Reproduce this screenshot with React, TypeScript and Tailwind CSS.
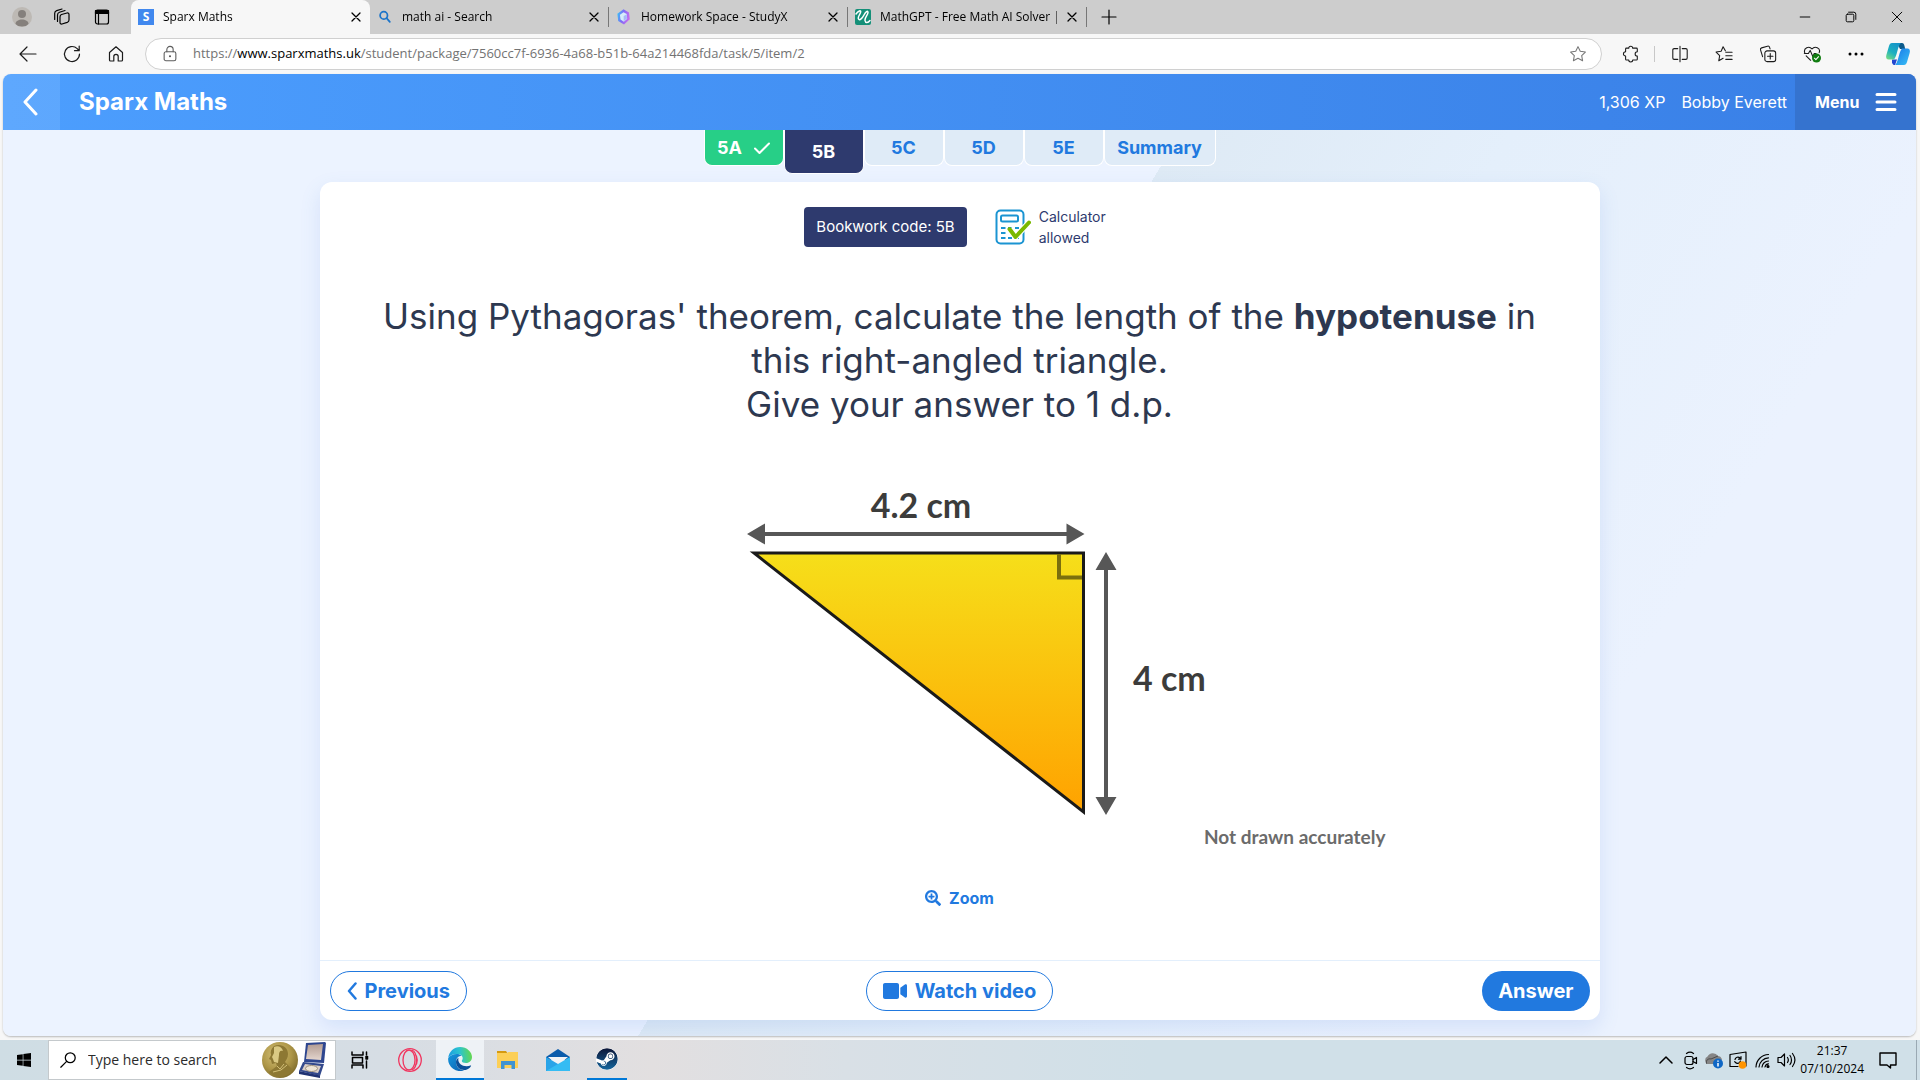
import { useState } from "react";
import type { ReactNode } from "react";
import { FaSearchPlus, FaSteam, FaVideo, FaWindows } from "react-icons/fa";

interface IconProps {
  children: ReactNode;
  className?: string;
  width?: number;
}

// thin outline icon, 20x20 box
function Line({ children, className = "size-5", width = 1.2 }: IconProps) {
  return (
    <svg
      viewBox="0 0 20 20"
      className={`shrink-0 ${className}`}
      fill="none"
      stroke="currentColor"
      strokeWidth={width}
      strokeLinecap="round"
      strokeLinejoin="round"
      aria-hidden="true"
    >
      {children}
    </svg>
  );
}

const STAR = "M10 1.8l2.5 5.2 5.7.8-4.1 4 1 5.7-5.1-2.7-5.1 2.7 1-5.7-4.1-4 5.7-.8z";

function SparxFavicon() {
  return (
    <span className="flex size-4 shrink-0 items-center justify-center bg-[#4188ee] text-xs font-bold text-white">
      S
    </span>
  );
}

function SearchFavicon() {
  return (
    <Line className="size-4 text-[#1b74c9]" width={2.2}>
      <circle cx="8.5" cy="8" r="4.6" />
      <path d="M12 11.5l4 4.5" />
    </Line>
  );
}

function StudyFavicon() {
  return (
    <svg viewBox="0 0 16 16" className="size-4 shrink-0" aria-hidden="true">
      <defs>
        <linearGradient id="study" x1="0" y1="0" x2="1" y2="0.3">
          <stop offset="0" stopColor="#2bd0f6" />
          <stop offset="0.5" stopColor="#7f6cf5" />
          <stop offset="1" stopColor="#c56cf0" />
        </linearGradient>
      </defs>
      <path d="M7.5.3L13 3.4l.8 6.8L8 15.6 2.2 12l-.8-7.2z" fill="url(#study)" />
      <path d="M7.5 3.2l3.2 1.9.5 4.6-3.3 3-3.4-2.2-.6-4.7z" fill="#d5ecfb" />
      <path d="M7.7 7v5.2L11 9.6l-.3-4.2z" fill="#a9b7f8" />
    </svg>
  );
}

function MathFavicon() {
  return (
    <svg viewBox="0 0 16 16" className="size-4 shrink-0" aria-hidden="true">
      <rect width="16" height="16" rx="2" fill="#148f78" />
      <path
        d="M1 5C3 2 6.500 .5 5.500 3.500S2.500 8 3.500 10s4-1 5.500-4 4-5 4-2.500-3.500 5-3 8 3 2.500 5 0"
        fill="none"
        stroke="#fff"
        strokeWidth="1.5"
        strokeLinecap="round"
      />
    </svg>
  );
}

const browserTabs = [
  { title: "Sparx Maths", icon: <SparxFavicon /> },
  { title: "math ai - Search", icon: <SearchFavicon /> },
  { title: "Homework Space - StudyX", icon: <StudyFavicon /> },
  { title: "MathGPT - Free Math AI Solver | N", icon: <MathFavicon /> },
];

function TabStrip() {
  return (
    <div className="flex h-[34px] items-stretch bg-[#cdcdcd] text-black">
      <div className="flex w-[131px] shrink-0 items-center gap-5 pl-3">
        <button aria-label="Profile" className="size-5 overflow-hidden rounded-full bg-[#bdb9b4]">
          <svg viewBox="0 0 20 20" fill="#85807c">
            <circle cx="10" cy="7" r="4" />
            <path d="M3.5 17c0-6 13-6 13 0l-3 2.5h-7z" />
          </svg>
        </button>
        <button aria-label="Workspaces">
          <Line className="size-5">
            <path d="M9.5 7.5L15 6c1.2-.3 2 .3 2 1.5V13c0 1.2-.6 2-1.8 2.4L10 17c-1.2.3-2-.3-2-1.5V10c0-1.3.4-2.2 1.5-2.5z" />
            <path d="M5.5 14.5V8c0-1.5.8-2.3 2-2.7L13 3.5M2.700 12.500V6.300c0-1.500.8-2.300 2-2.700L10 2" />
          </Line>
        </button>
        <button aria-label="Tab actions">
          <Line className="size-5">
            <rect x="3.5" y="3" width="13" height="14" rx="2" />
            <path d="M3.5 3.5h13v3h-13z" fill="currentColor" />
            <path d="M6.5 7v10" />
          </Line>
        </button>
      </div>

      {browserTabs.map((tab, index) => (
        <div
          key={tab.title}
          className={`flex w-[239px] min-w-0 items-center pl-[7px] ${
            index === 0 ? "rounded-t-lg bg-[#f7f7f7]" : ""
          }`}
        >
          {tab.icon}
          <span className="ml-[9px] min-w-0 flex-1 overflow-hidden text-xs whitespace-nowrap [mask-image:linear-gradient(90deg,#000_94%,transparent)]">
            {tab.title}
          </span>
          <button aria-label={`Close ${tab.title}`} className="mr-[6px]">
            <Line className="size-4" width={1.6}>
              <path d="M5 5l10 10M15 5L5 15" />
            </Line>
          </button>
          {index > 0 && <span className="h-5 w-px bg-[#777]" />}
        </div>
      ))}

      <button aria-label="New tab" className="ml-2 w-7">
        <Line className="mx-auto size-5">
          <path d="M10 3v14M3 10h14" />
        </Line>
      </button>

      <div className="ml-auto flex">
        <button aria-label="Minimise" className="flex w-[46px] items-center justify-center">
          <Line className="size-4">
            <path d="M4 10h12" />
          </Line>
        </button>
        <button aria-label="Restore" className="flex w-[46px] items-center justify-center">
          <Line className="size-4">
            <rect x="4" y="6.5" width="9.5" height="9.5" rx="1.5" />
            <path d="M7 4h6.5A2.5 2.5 0 0 1 16 6.500V13" />
          </Line>
        </button>
        <button aria-label="Close window" className="flex w-[46px] items-center justify-center">
          <Line className="size-4">
            <path d="M4 4l12 12M16 4L4 16" />
          </Line>
        </button>
      </div>
    </div>
  );
}

function AddressBar() {
  return (
    <div className="flex h-10 items-center bg-[#f7f7f7] text-[#1b1b1b]">
      <div className="flex w-[145px] shrink-0 gap-6 pl-[18px]">
        <button aria-label="Back">
          <Line>
            <path d="M18 10H2.5M9 3l-7 7 7 7" />
          </Line>
        </button>
        <button aria-label="Refresh">
          <Line>
            <path d="M17.5 10a7.5 7.5 0 1 1-2.3-5.4L17 6.500M17.200 2v4.700h-4.700" />
          </Line>
        </button>
        <button aria-label="Home">
          <Line>
            <path d="M3.5 8.5L10 2.800l6.500 5.700V16a1 1 0 0 1-1 1h-3.300v-4.500a2.200 2.200 0 0 0-4.400 0V17H4.500a1 1 0 0 1-1-1z" />
          </Line>
        </button>
      </div>

      <div className="flex h-8 flex-1 items-center rounded-full border border-[#d0d0d0] bg-white pr-[14px] pl-[15px]">
        <Line className="size-[18px] text-[#5c5c5c]">
          <rect x="3.5" y="7.5" width="13" height="10" rx="2" />
          <path d="M6.5 7.5V5a3.500 3.500 0 0 1 7 0v2.500" />
          <circle cx="10" cy="12.5" r="0.6" fill="currentColor" />
        </Line>
        <p className="ml-[14px] flex-1 text-[13px] text-[#737373]">
          https://<span className="text-black">www.sparxmaths.uk</span>
          /student/package/7560cc7f-6936-4a68-b51b-64a214468fda/task/5/item/2
        </p>
        <button aria-label="Add to favourites" className="text-[#777]">
          <Line className="size-[18px]">
            <path d={STAR} />
          </Line>
        </button>
      </div>

      <div className="flex w-[318px] shrink-0 items-center pl-5">
        <button aria-label="Extensions">
          <Line className="size-[18px]">
            <path d="M7.5 3.5a2.200 2.200 0 0 1 4.400 0H16a1 1 0 0 1 1 1v3a2.400 2.400 0 0 0 0 4.800v3.400a1 1 0 0 1-1 1h-4.100a2.200 2.200 0 0 1-4.400 0H5a1 1 0 0 1-1-1v-3.400a2.400 2.400 0 0 1 0-4.800v-3a1 1 0 0 1 1-1z" />
          </Line>
        </button>
        <span className="ml-[14px] h-4 w-px bg-[#c8c8c8]" />
        <div className="ml-4 flex items-center gap-[26px]">
          <button aria-label="Split screen">
            <Line className="size-[18px]">
              <path d="M10 1.5v17M7.5 4h-4A1.500 1.500 0 0 0 2 5.500v9A1.500 1.500 0 0 0 3.500 16h4M12.500 4h4A1.500 1.500 0 0 1 18 5.500v9a1.500 1.500 0 0 1-1.500 1.500h-4" />
            </Line>
          </button>
          <button aria-label="Favourites">
            <Line className="size-[18px]">
              <path d="M11.5 6.5L9 2 6.800 7l-5.600.8 4 4-1 5.700L9 14.800M12 8h7M12 12h7M12 16h7" />
            </Line>
          </button>
          <button aria-label="Collections">
            <Line className="size-[18px]">
              <rect x="6.5" y="6.5" width="12" height="12" rx="2.5" />
              <path d="M12.5 9.5v6M9.5 12.5h6M4 13L1.700 5.500c-.3-1 .2-2 1.200-2.300l6.500-1.900c1-.3 2 .2 2.300 1.200l.6 1.800" />
            </Line>
          </button>
          <button aria-label="Browser essentials">
            <Line className="size-[18px]">
              <path d="M2 9C0 3 7 .5 10 4.500 13 .5 20 3 18 8.500M3.500 12l5 5M1.500 9.500H6l2-3.500 3 7 1.500-3.500h2" />
              <circle cx="15" cy="14.5" r="5" fill="#107c10" stroke="none" />
              <path d="M12.7 14.7l1.6 1.6 3-3.3" stroke="#fff" />
            </Line>
          </button>
          <button aria-label="Settings and more">
            <svg viewBox="0 0 18 18" className="size-[18px]">
              <circle cx="3" cy="9" r="1.5" />
              <circle cx="9" cy="9" r="1.5" />
              <circle cx="15" cy="9" r="1.5" />
            </svg>
          </button>
        </div>
        <button aria-label="Copilot" className="ml-[21px]">
          <svg viewBox="0 0 24 24" className="size-6">
            <defs>
              <linearGradient id="cop1" x1="0" y1="1" x2="0.6" y2="0">
                <stop offset="0" stopColor="#7ee07c" />
                <stop offset="0.5" stopColor="#1cb0c0" />
                <stop offset="1" stopColor="#1596c8" />
              </linearGradient>
              <linearGradient id="cop2" x1="0" y1="0" x2="1" y2="1">
                <stop offset="0" stopColor="#1877e8" />
                <stop offset="1" stopColor="#39c0f5" />
              </linearGradient>
            </defs>
            <path d="M11 1h5c1.5 0 2 1 2.500 3l.7 3H14z" fill="#0c5a8a" />
            <path d="M6 17.5h5L9 23H8c-1 0-1.5-1-2-2.500z" fill="#2446d0" />
            <path d="M6 1h9c-3 1-4 14-7 16.500H2.500C0 17.500-.3 15 .5 12.500L3 4c.6-2 1.500-3 3-3z" fill="url(#cop1)" />
            <path d="M16 6.500h5.500c2.500 0 2.800 2.500 2 5L21 20c-.6 2-1.500 3-3 3H9c3-1 4-14 7-16.500z" fill="url(#cop2)" />
          </svg>
        </button>
      </div>
    </div>
  );
}

function SiteHeader() {
  return (
    <header className="flex h-14 items-stretch bg-linear-to-r from-[#4c9efe] to-[#397fe6] text-white">
      <button aria-label="Back" className="flex w-[57px] items-center bg-white/10 pl-[19px]">
        <svg viewBox="0 0 16 28" className="h-7 w-4" fill="none" stroke="currentColor" strokeWidth="3" strokeLinecap="round" strokeLinejoin="round">
          <path d="M14 2L3 14l11 12" />
        </svg>
      </button>
      <a href="#" className="ml-[19px] self-center text-2xl font-bold">
        Sparx Maths
      </a>
      <div className="ml-auto flex items-center gap-4 pr-2 text-base">
        <span>1,306 XP</span>
        <span>Bobby Everett</span>
      </div>
      <button className="flex w-[121px] items-center gap-4 bg-[#3573cf] pl-5 text-base font-bold">
        Menu
        <svg viewBox="0 0 22 20" className="h-5 w-[22px]" stroke="currentColor" strokeWidth="3" strokeLinecap="round">
          <path d="M2 2.5h18M2 10h18M2 17.5h18" />
        </svg>
      </button>
    </header>
  );
}

const taskTabs = ["5A", "5B", "5C", "5D", "5E", "Summary"];

function TaskTabs({ current, onSelect }: { current: string; onSelect: (tab: string) => void }) {
  return (
    <nav className="flex h-[52px] items-start justify-center text-lg font-bold">
      {taskTabs.map((tab) => {
        const done = tab === "5A";
        const color =
          tab === current
            ? "h-11 bg-[#2e3a6e] text-white"
            : done
              ? "h-9 bg-[#27cf87] text-white"
              : "h-9 bg-[#dfebf7] text-[#2179df]";
        return (
          <button
            key={tab}
            onClick={() => onSelect(tab)}
            className={`flex items-center justify-center gap-3 rounded-b-lg border border-t-0 border-white ${color} ${
              tab === "Summary" ? "w-28" : "w-20"
            }`}
          >
            {tab}
            {done && (
              <svg viewBox="0 0 16 12" className="h-3 w-4" fill="none" stroke="currentColor" strokeWidth="2" strokeLinecap="round" strokeLinejoin="round">
                <path d="M1 6.5L5.5 11 15 1.5" />
              </svg>
            )}
          </button>
        );
      })}
    </nav>
  );
}

function CalculatorIcon() {
  return (
    <svg viewBox="0 0 36 36" className="size-9" fill="none" aria-hidden="true">
      <rect x="1.5" y="1.5" width="27" height="33" rx="4" stroke="#1b94d2" strokeWidth="2" />
      <rect x="6" y="6.5" width="17" height="6" rx="1.5" stroke="#1b94d2" strokeWidth="2" />
      <path d="M6 19h4.5M13 19h4M20 19h4M6 24h4.5M6 29h4.5M13 29h4M20 29h4" stroke="#1b94d2" strokeWidth="2.2" />
      <path d="M14.5 20l6 8L34 13.5" stroke="#fff" strokeWidth="6" />
      <path d="M14.5 20l6 8L34 13.5" stroke="#7ab800" strokeWidth="4" strokeLinecap="round" strokeLinejoin="round" />
    </svg>
  );
}

function TriangleFigure() {
  return (
    <svg
      viewBox="0 0 880 380"
      className="w-full max-w-[880px] font-['Lato',sans-serif] font-bold"
      role="img"
      aria-label="Right-angled triangle with sides 4.2 cm and 4 cm"
    >
      <defs>
        <linearGradient id="fill" x1="0" y1="0" x2="0" y2="1">
          <stop offset="0" stopColor="#f6df1a" />
          <stop offset="1" stopColor="#ffa200" />
        </linearGradient>
      </defs>
      <path d="M234 73H563.5V332z" fill="url(#fill)" stroke="#1a1a1a" strokeWidth="3" />
      <path d="M539 74V97.5H562" fill="none" stroke="#7b6f0d" strokeWidth="4" />
      <g fill="#575757">
        <path d="M240 52h310v4H240z" />
        <path d="M227 54l18-10.5v21zM564.5 54l-18-10.5v21z" />
        <path d="M584 85h4v240h-4z" />
        <path d="M586 72l-10.5 18h21zM586 335l-10.5-18h21z" />
      </g>
      <text x="401" y="38" textAnchor="middle" fontSize="34" fill="#3c3c3b">
        4.2 cm
      </text>
      <text x="613" y="211" fontSize="34" fill="#3c3c3b">
        4 cm
      </text>
      <text x="684" y="364" fontSize="19" fill="#6b6b6b">
        Not drawn accurately
      </text>
    </svg>
  );
}

function QuestionCard() {
  return (
    <section className="flex w-full max-w-7xl flex-1 flex-col rounded-xl bg-white shadow-[0_8px_20px_rgba(80,130,220,0.15)]">
      <div className="flex flex-1 flex-col items-center px-10">
        <div className="mt-6 flex items-center text-[#2e3a6e]">
          <div className="rounded-sm bg-[#2e3a6e] px-3 py-2 text-[15px] leading-6 text-white">
            Bookwork code: 5B
          </div>
          <div className="ml-7 flex items-center gap-2">
            <CalculatorIcon />
            <p className="w-[76px] text-sm leading-[21px]">Calculator allowed</p>
          </div>
        </div>

        <h1 className="mt-[46px] text-center text-[35px] leading-[44px] text-[#2d3850]">
          Using Pythagoras' theorem, calculate the length of the{" "}
          <strong className="font-bold">hypotenuse</strong> in
          <br />
          this right-angled triangle.
          <br />
          Give your answer to 1 d.p.
        </h1>

        <div className="mt-[54px] flex w-full justify-center">
          <TriangleFigure />
        </div>

        <button className="mt-[26px] flex items-center gap-2 font-bold text-[#2179df]">
          <FaSearchPlus className="size-4" />
          Zoom
        </button>
      </div>

      <footer className="grid grid-cols-3 items-center border-t border-[#e3effc] px-[10px] pt-[10px] pb-[9px] text-xl font-bold text-[#2179df]">
        <button className="flex h-10 items-center gap-2 justify-self-start rounded-full border border-[#2179df] px-4">
          <svg viewBox="0 0 10 18" className="h-[18px] w-[10px]" fill="none" stroke="currentColor" strokeWidth="2.5" strokeLinecap="round" strokeLinejoin="round">
            <path d="M8.5 1.5L2 9l6.5 7.5" />
          </svg>
          Previous
        </button>
        <button className="flex h-10 items-center gap-2 justify-self-center rounded-full border border-[#2179df] px-4">
          <FaVideo className="size-6" />
          Watch video
        </button>
        <button className="h-10 justify-self-end rounded-full bg-[#2179df] px-4 text-white">
          Answer
        </button>
      </footer>
    </section>
  );
}

function NobelArt() {
  return (
    <svg viewBox="0 0 66 38" className="h-[38px] w-[66px] shrink-0" aria-hidden="true">
      <defs>
        <radialGradient id="gold" cx="0.4" cy="0.35" r="0.7">
          <stop offset="0" stopColor="#d6c27a" />
          <stop offset="0.6" stopColor="#ad9647" />
          <stop offset="1" stopColor="#7d6a2b" />
        </radialGradient>
        <linearGradient id="satin" x1="0" y1="0" x2="0" y2="1">
          <stop offset="0" stopColor="#b39d93" />
          <stop offset="1" stopColor="#e3d5cd" />
        </linearGradient>
      </defs>
      <circle cx="18" cy="19" r="18" fill="url(#gold)" />
      <path d="M12 5c7-3 14 1 14 8 0 4-2 6-3 8l8 8c-5 8-19 9-24 2l8-6-1-3-4 1-1-4-2-1 2-4c-1-3 0-6 3-9z" fill="#8d7833" />
      <path d="M12 6c4-2 8 0 9 4-3-1-4 1-4 4l-1 8-4-1-1-3-1-2 2-4z" fill="#dac983" />
      <path d="M15 25l3 3 4-5M11 31l8-2 6-5" stroke="#d3c078" fill="none" />
      <path d="M44 2l19-1 1 1-2 20-20-1z" fill="#2e468f" />
      <path d="M46 4l15-1-2 16-15-1z" fill="url(#satin)" />
      <path d="M41 21l21 2-4 12-21-5z" fill="#33498c" />
      <path d="M43 23l16 2-3 7-16-3z" fill="#d9cec8" />
      <ellipse cx="49.5" cy="27.5" rx="6" ry="3" fill="#eee4d5" stroke="#9b8f7c" />
      <path d="M37 30l21 4.5V37l-21-4z" fill="#1f3272" />
    </svg>
  );
}

function EdgeLogo() {
  return (
    <svg viewBox="0 0 24 24" className="size-6" aria-hidden="true">
      <defs>
        <linearGradient id="edgeTop" x1="0" y1="0.5" x2="1" y2="0.4">
          <stop offset="0" stopColor="#1b9de2" />
          <stop offset="0.5" stopColor="#2bc4cf" />
          <stop offset="1" stopColor="#66d84a" />
        </linearGradient>
        <linearGradient id="edgeLow" x1="0" y1="0" x2="1" y2="1">
          <stop offset="0" stopColor="#1597dd" />
          <stop offset="1" stopColor="#0b5fb0" />
        </linearGradient>
      </defs>
      <path d="M.2 11C1 4.5 6 0 12 0c7 0 12 5 12 10 0 3.5-2.5 6-6 6-2.500 0-4.200-1-4.200-2 0-.6.9-1 .9-2.700C14.700 8.500 12 7 8.800 7 5 7 2 8.500.2 11z" fill="url(#edgeTop)" />
      <path d="M.1 11.5C1.5 8.5 5 7 8.800 7c2 0 3.700.6 4.700 1.700C9.500 9 8 12 8 15c0 5 4 8.500 8.500 8.200A12 12 0 0 1 .1 11.500z" fill="url(#edgeLow)" />
      <path d="M10.5 10.7C8.5 12 8 13.5 8 15c0 5.500 5.500 9.500 11 7.500 2-.9 3.300-2.200 4-3.500.3-.5-.2-.8-.6-.5-1 .5-2.200.8-3.800.8-5 0-8.300-3.500-8.300-6.500 0-.8.1-1.500.2-2.100z" fill="#0a4f98" />
    </svg>
  );
}

function SteamLogo() {
  return (
    <>
      <svg width="0" height="0" aria-hidden="true">
        <defs>
          <linearGradient id="steam" x1="0" y1="0" x2="0" y2="1">
            <stop offset="0" stopColor="#0c1638" />
            <stop offset="1" stopColor="#15659c" />
          </linearGradient>
        </defs>
      </svg>
      <FaSteam className="size-[22px] rounded-full bg-white" fill="url(#steam)" />
    </>
  );
}

function Taskbar() {
  return (
    <div className="flex h-10 items-stretch bg-[linear-gradient(90deg,#cfdde4,#d6dde4_20%,#e2dfe0_34%,#d9e0e6_44%,#d0e0e8_60%,#d0e0e8)] text-black">
      <button aria-label="Start" className="flex w-12 items-center justify-center">
        <FaWindows className="size-4" />
      </button>
      <label className="flex w-72 items-center border border-[#c4c9cc] bg-white pr-[7px] pl-[10px]">
        <Line className="size-[18px]" width={1.4}>
          <circle cx="12.5" cy="7.5" r="5.5" />
          <path d="M8.5 11.5L2 18" />
        </Line>
        <input
          type="text"
          aria-label="Search"
          placeholder="Type here to search"
          className="ml-[11px] min-w-0 flex-1 text-sm outline-none placeholder:text-[#2b2b2b]"
        />
        <NobelArt />
      </label>
      <button aria-label="Task view" className="flex w-12 items-center justify-center">
        <Line className="size-5" width={1.5}>
          <path d="M2 2v3h11V2M2 18v-3h11v3M2.5 7.5h10V13h-10zM16.5 2v3M16.5 11v7" />
          <path d="M16 6.5h1.5V9H16z" fill="currentColor" />
        </Line>
      </button>
      <button aria-label="Opera" className="flex w-[52px] items-center justify-center">
        <svg viewBox="0 0 24 24" className="size-6" fill="none" stroke="#f0365f" strokeWidth="1.3">
          <circle cx="12" cy="12" r="11.3" />
          <ellipse cx="11" cy="12" rx="6" ry="10" />
          <path d="M14 2c6 3 6 17 0 20M17 6c3 3 3 9 0 12" />
        </svg>
      </button>
      <button aria-label="Microsoft Edge" className="flex w-12 items-center justify-center border-b-2 border-[#0078d7] bg-[#eef2f6]">
        <EdgeLogo />
      </button>
      <button aria-label="File Explorer" className="flex w-12 items-center justify-center">
        <svg viewBox="0 0 24 20" className="h-5 w-6">
          <path d="M1 1h9l2 3H1z" fill="#d59a10" />
          <path d="M1 3h10l1.5-1H22v16H1z" fill="#fccf57" />
          <path d="M5 11h14v8h-3.5v-4h-7v4H5z" fill="#3f93d2" />
        </svg>
      </button>
      <button aria-label="Mail" className="flex w-[52px] items-center justify-center">
        <svg viewBox="0 0 24 24" className="size-6">
          <path d="M0 9L12 1l12 8v3H0z" fill="#0b5cab" />
          <path d="M2 9h20l-8 7H10z" fill="#f2f3f5" />
          <path d="M0 9l24 14H0z" fill="#2aa4e8" />
          <path d="M24 9L0 23h24z" fill="#35bcf3" />
        </svg>
      </button>
      <button aria-label="Steam" className="ml-[3px] flex w-10 items-center justify-center border-b-2 border-[#0078d7]">
        <SteamLogo />
      </button>

      <div className="ml-auto flex items-center gap-1">
        <Line width={1.5}>
          <path d="M4 13l6-6 6 6" />
        </Line>
        <Line>
          <rect x="5" y="6.5" width="8" height="8" rx="2" />
          <path d="M13 9.5l3.5-2v6l-3.5-2M6.5 3.5c2-1.500 5-1.500 7 0M6.500 17.500c2 1.500 5 1.500 7 0" />
        </Line>
        <svg viewBox="0 0 20 20" className="size-5" aria-hidden="true">
          <path d="M4 14a4 4 0 0 1-.5-7.500A6 6 0 0 1 14 6c3 0 4 3 4 4l-7 4z" fill="#858585" />
          <path d="M3 14c-2-3 1-6 4-5l7-3" fill="none" stroke="#4a4a4a" />
          <circle cx="14" cy="13.5" r="5" fill="#0f67c5" />
          <path d="M14 10.5v1.2M14 13v3.5" stroke="#fff" strokeWidth="1.5" />
        </svg>
        <Line>
          <path d="M2 4.5L18 2v14l-5 .5M2 4.5v12h8" />
          <path d="M7 9.5a3 3 0 0 1 5-1.500l1 1M13 6.500v2.700h-2.500M12.500 11a3 3 0 0 1-5 1.500l-.8-.8" />
          <circle cx="14.5" cy="15" r="3.8" fill="#ff9400" stroke="none" />
        </Line>
        <Line>
          <path d="M4 17A13 13 0 0 1 16.5 4.5M7 17A10 10 0 0 1 16.500 7.800M10 17a6.500 6.500 0 0 1 6.500-6M13 17a4 4 0 0 1 3.500-3.200" />
          <circle cx="16" cy="16.5" r="1" fill="currentColor" />
        </Line>
        <Line>
          <path d="M2 7.5h3L8.500 4v12L5 12.500H2zM11.500 7.500c1 1.500 1 3.500 0 5M14 5.500c2 2.500 2 6.500 0 9M16.500 3.500c3 4 3 9 0 13" />
        </Line>
        <div className="text-center text-xs leading-[18px]">
          <p>21:37</p>
          <p>07/10/2024</p>
        </div>
        <button aria-label="Notifications" className="flex w-10 justify-center">
          <Line width={1.4}>
            <path d="M2 3h16v12h-5.5v3L9 15H2z" />
          </Line>
        </button>
        <span className="ml-1 h-full w-1 border-l border-[#9aa9b3]" />
      </div>
    </div>
  );
}

export default function App() {
  const [current, setCurrent] = useState("5B");

  return (
    <div className="flex min-h-screen flex-col bg-[#f7f7f7] font-['Open_Sans','Noto_Sans',sans-serif]">
      <TabStrip />
      <AddressBar />
      <div className="flex flex-1 flex-col pr-1 pb-1 pl-[3px]">
        <div className="flex flex-1 flex-col overflow-hidden rounded-lg bg-[linear-gradient(121deg,#ecf3ff_48.7%,#deeaf5_48.7%,#e4effb_62%,#ebf2fe_80%)] font-['Inter',sans-serif] shadow-[0_1px_2px_rgba(0,0,0,0.25)]">
          <SiteHeader />
          <TaskTabs current={current} onSelect={setCurrent} />
          <main className="flex flex-1 flex-col items-center pb-4">
            <QuestionCard />
          </main>
        </div>
      </div>
      <Taskbar />
    </div>
  );
}
